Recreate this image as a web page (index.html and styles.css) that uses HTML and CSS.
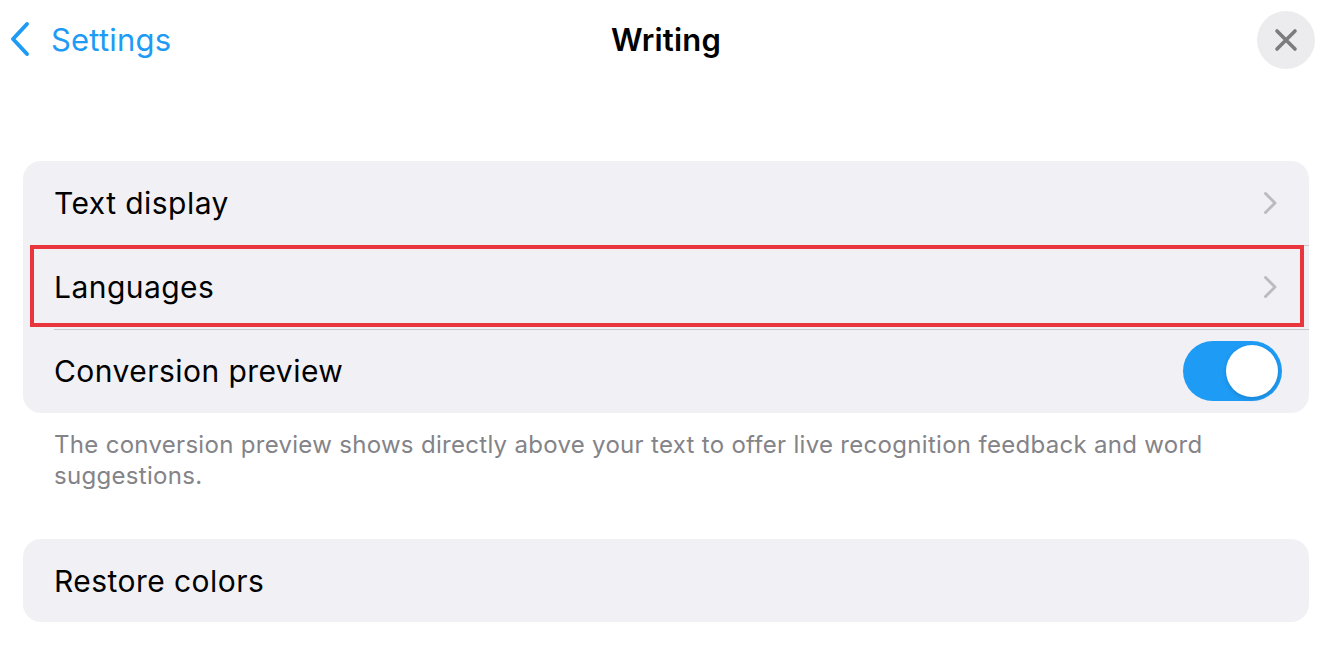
FILE: index.html
```html
<!DOCTYPE html>
<html>
<head>
<meta charset="utf-8">
<link rel="stylesheet" href="styles.css">
</head>
<body>
<div class="page">
  <header class="nav">
    <div class="back">
      <svg class="back-icon" width="22" height="36" viewBox="0 0 22 36"><path d="M18 3 L4 18 L18 33" fill="none" stroke="#1e9bf5" stroke-width="4" stroke-linecap="round" stroke-linejoin="round"/></svg>
      <span class="back-label">Settings</span>
    </div>
    <div class="title">Writing</div>
    <div class="close">
      <svg width="24" height="24" viewBox="0 0 24 24"><path d="M3 3 L21 21 M21 3 L3 21" stroke="#7c7c80" stroke-width="3.6" stroke-linecap="round"/></svg>
    </div>
  </header>

  <section class="group">
    <div class="row">
      <span class="label">Text display</span>
      <svg class="chev" width="14" height="24" viewBox="0 0 14 24"><path d="M2.5 2.5 L12 12 L2.5 21.5" fill="none" stroke="#bcbcc0" stroke-width="3" stroke-linecap="round" stroke-linejoin="round"/></svg>
    </div>
    <div class="row highlighted">
      <span class="label">Languages</span>
      <svg class="chev" width="14" height="24" viewBox="0 0 14 24"><path d="M2.5 2.5 L12 12 L2.5 21.5" fill="none" stroke="#bcbcc0" stroke-width="3" stroke-linecap="round" stroke-linejoin="round"/></svg>
      <div class="hl-box"></div>
    </div>
    <div class="row">
      <span class="label">Conversion preview</span>
      <div class="toggle"><div class="knob"></div></div>
    </div>
  </section>
  <p class="note">The conversion preview shows directly above your text to offer live recognition feedback and word suggestions.</p>

  <section class="group group2">
    <div class="row">
      <span class="label">Restore colors</span>
    </div>
  </section>
</div>
</body>
</html>
```

FILE: styles.css
```css
* { box-sizing: border-box; }
html, body { margin: 0; padding: 0; background: #ffffff; }
body { font-family: Inter, "Noto Sans", sans-serif; color: #000; }
.page { width: 1324px; height: 650px; overflow: hidden; padding: 0 15px 0 23px; }

.nav {
  position: relative;
  height: 80px;
  display: flex;
  align-items: center;
  justify-content: space-between;
  margin-left: -23px;
  margin-right: -15px;
  padding: 0 9px 0 9px;
}
.back { display: flex; align-items: center; gap: 20px; margin-top: -2px; }
.back-icon { display: block; }
.back-label { color: #1e9bf5; font-size: 31px; letter-spacing: 0.2px; }
.title {
  position: absolute;
  left: 8px; right: 0;
  text-align: center;
  font-size: 31px;
  font-weight: 600;
  letter-spacing: 0.2px;
  pointer-events: none;
  margin-top: -2px;
}
.close {
  width: 58px; height: 58px; border-radius: 50%;
  background: #ececee;
  display: flex; align-items: center; justify-content: center;
}

.group {
  margin-top: 81px;
  background: #f1f0f5;
  border-radius: 18px;
  overflow: visible;
}
.row {
  position: relative;
  height: 84px;
  display: flex;
  align-items: center;
  justify-content: space-between;
  padding: 0 28px 0 31px;
}
.row + .row::before {
  content: "";
  position: absolute;
  left: 31px; right: 0; top: 0;
  height: 1px;
  background: #c9c9cd;
}
.label { font-size: 30px; letter-spacing: 0.45px; }
.chev { display: block; margin-right: 4px; }
.hl-box {
  position: absolute;
  left: 7px; right: 5px; top: 0; bottom: 2px;
  border: 4px solid #e8363c;
}
.toggle {
  width: 99px; height: 60px; border-radius: 30px;
  background: #1e9bf5;
  display: flex; align-items: center; justify-content: flex-end;
  padding: 4px;
  margin-right: -1px;
}
.knob { width: 52px; height: 52px; border-radius: 50%; background: #fff; box-shadow: 0 2px 4px rgba(0,0,0,0.15); }

.note {
  margin: 16px 0 0 0;
  padding: 0 31px;
  font-size: 24px;
  line-height: 31px;
  color: #838388;
  letter-spacing: 0.3px;
}
.group2 { margin-top: 48px; }
.group2 .row { height: 83px; }
```
